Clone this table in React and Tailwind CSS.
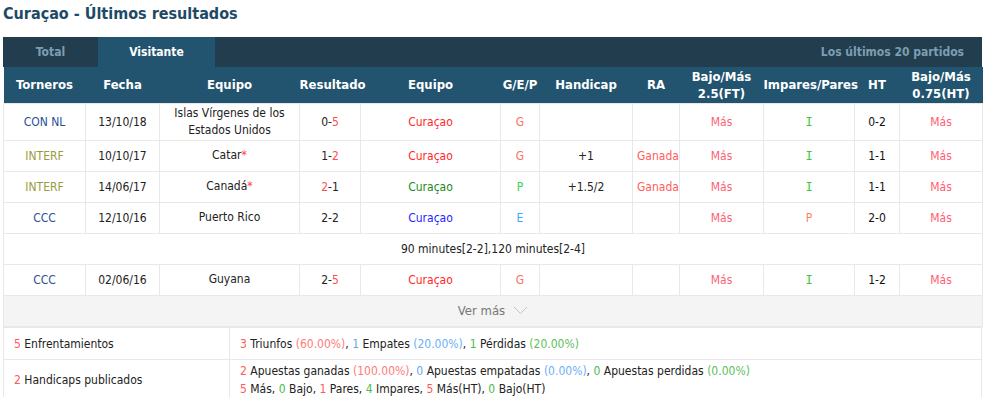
import { useState } from "react";

const cols = [82, 74, 140, 61, 140, 39, 93, 47, 84, 91, 45, 83];

const headers = [
  "Torneros",
  "Fecha",
  "Equipo",
  "Resultado",
  "Equipo",
  "G/E/P",
  "Handicap",
  "RA",
  <>Bajo/Más<br />2.5(FT)</>,
  "Impares/Pares",
  "HT",
  <>Bajo/Más<br />0.75(HT)</>,
];

const teamColor = {
  red: "text-[#ff2a2a]",
  green: "text-[#1a8a1a]",
  blue: "text-[#1f1fff]",
};

const gepColor = {
  G: "text-[#ff6f61]",
  P: "text-[#3ccf5a]",
  E: "text-[#3ea9ff]",
};

const rows = [
  {
    league: "CON NL",
    leagueCls: "text-[#2a4f9a]",
    date: "13/10/18",
    home: "Islas Vírgenes de los Estados Unidos",
    score: [["0", false], ["5", true]],
    away: "Curaçao",
    awayCls: teamColor.red,
    gep: "G",
    hc: "",
    ra: "",
    ou: "Más",
    oe: "I",
    ht: "0-2",
    ouht: "Más",
    tall: true,
  },
  {
    league: "INTERF",
    leagueCls: "text-[#9a9a3e]",
    date: "10/10/17",
    home: "Catar",
    star: true,
    score: [["1", false], ["2", true]],
    away: "Curaçao",
    awayCls: teamColor.red,
    gep: "G",
    hc: "+1",
    ra: "Ganada",
    ou: "Más",
    oe: "I",
    ht: "1-1",
    ouht: "Más",
  },
  {
    league: "INTERF",
    leagueCls: "text-[#9a9a3e]",
    date: "14/06/17",
    home: "Canadá",
    star: true,
    score: [["2", true], ["1", false]],
    away: "Curaçao",
    awayCls: teamColor.green,
    gep: "P",
    hc: "+1.5/2",
    ra: "Ganada",
    ou: "Más",
    oe: "I",
    ht: "1-1",
    ouht: "Más",
  },
  {
    league: "CCC",
    leagueCls: "text-[#2a4f9a]",
    date: "12/10/16",
    home: "Puerto Rico",
    score: [["2", false], ["2", false]],
    away: "Curaçao",
    awayCls: teamColor.blue,
    gep: "E",
    hc: "",
    ra: "",
    ou: "Más",
    oe: "P",
    ht: "2-0",
    ouht: "Más",
    note: "90 minutes[2-2],120 minutes[2-4]",
  },
  {
    league: "CCC",
    leagueCls: "text-[#2a4f9a]",
    date: "02/06/16",
    home: "Guyana",
    score: [["2", false], ["5", true]],
    away: "Curaçao",
    awayCls: teamColor.red,
    gep: "G",
    hc: "",
    ra: "",
    ou: "Más",
    oe: "I",
    ht: "1-2",
    ouht: "Más",
  },
];

const td = "border border-[#e8e8e8] text-center align-middle px-1";

function Row({ r }) {
  return (
    <>
      <tr className={r.tall ? "h-[37px]" : "h-[31px]"}>
        <td className={`${td} ${r.leagueCls}`}>{r.league}</td>
        <td className={`${td} text-[#222]`}>{r.date}</td>
        <td className={`${td} text-[#222] leading-[17px]`}>
          {r.home}
          {r.star && <span className="text-[#ff3b3b]">*</span>}
        </td>
        <td className={`${td} text-[#222]`}>
          <span className={r.score[0][1] ? "text-[#ff4d4d]" : ""}>{r.score[0][0]}</span>-
          <span className={r.score[1][1] ? "text-[#ff4d4d]" : ""}>{r.score[1][0]}</span>
        </td>
        <td className={`${td} ${r.awayCls}`}>{r.away}</td>
        <td className={`${td} ${gepColor[r.gep]}`}>{r.gep}</td>
        <td className={`${td} text-[#222]`}>{r.hc}</td>
        <td className={`${td} text-[#ff5c5c]`}>{r.ra}</td>
        <td className={`${td} text-[#ff6073]`}>{r.ou}</td>
        <td
          className={`${td} ${r.oe === "I" ? "text-[#3cc83c]" : "text-[#ff8060]"}`}
          style={r.oe === "I" ? { fontFamily: '"DejaVu Sans Mono", monospace' } : undefined}
        >
          {r.oe}
        </td>
        <td className={`${td} text-[#111]`}>{r.ht}</td>
        <td className={`${td} text-[#ff6073]`}>{r.ouht}</td>
      </tr>
      {r.note && (
        <tr className="h-[31px]">
          <td colSpan={12} className={`${td} text-[#222]`}>{r.note}</td>
        </tr>
      )}
    </>
  );
}

const R = ({ children }) => <span className="text-[#ff5a5a]">{children}</span>;
const Rl = ({ children }) => <span className="text-[#ff7a7a]">{children}</span>;
const B = ({ children }) => <span className="text-[#6aa8f0]">{children}</span>;
const Bl = ({ children }) => <span className="text-[#6cb0f5]">{children}</span>;
const G = ({ children }) => <span className="text-[#4cba4c]">{children}</span>;
const Gl = ({ children }) => <span className="text-[#5cc05c]">{children}</span>;

export default function App() {
  const [tab, setTab] = useState("Visitante");

  return (
    <div
      className="w-[983px] h-[397px] bg-white text-[12px] text-[#222] overflow-hidden"
      style={{ fontFamily: 'Tahoma, "DejaVu Sans Condensed", "DejaVu Sans", sans-serif' }}
    >
      <h1 className="h-[37px] pl-[3px] pt-[3px] text-[16px] font-bold text-[#1e4a66] leading-[22px]">
        Curaçao - Últimos resultados
      </h1>

      <div className="ml-[3px] mr-[1px]">
        <div className="flex h-[30px] bg-[#223e4e] items-stretch">
          {["Total", "Visitante"].map((t) => (
            <button
              key={t}
              onClick={() => setTab(t)}
              className={`font-bold text-[12px] ${
                t === "Total" ? "w-[95px]" : "w-[117px]"
              } ${tab === t ? "bg-[#22546f] text-white" : "text-[#7d9db2]"}`}
            >
              {t}
            </button>
          ))}
          <div className="flex-1 flex items-center justify-end pr-[18px] font-bold text-[12px] text-[#7d9db2]">
            Los últimos 20 partidos
          </div>
        </div>

        <table className="w-full border-collapse table-fixed">
          <colgroup>
            {cols.map((w, i) => (
              <col key={i} style={{ width: w }} />
            ))}
          </colgroup>
          <thead>
            <tr className="h-[36px] bg-[#22546f] text-white font-bold text-[13px] leading-[17px]">
              {headers.map((h, i) => (
                <th key={i} className="text-center align-middle px-0 font-bold">
                  {h}
                </th>
              ))}
            </tr>
          </thead>
          <tbody>
            {rows.map((r, i) => (
              <Row key={i} r={r} />
            ))}
            <tr className="h-[31px] bg-[#f4f4f4]">
              <td colSpan={12} className="border border-[#e8e8e8] text-center text-[#777] text-[13px]">
                <span className="inline-flex items-center gap-[8px]">
                  Ver más
                  <svg width="15" height="9" viewBox="0 0 15 9" fill="none">
                    <path d="M1 1l6.5 6.5L14 1" stroke="#c4c4c4" strokeWidth="1" />
                  </svg>
                </span>
              </td>
            </tr>
          </tbody>
        </table>

        <table className="w-full border-collapse table-fixed">
          <colgroup>
            <col style={{ width: 226 }} />
            <col />
          </colgroup>
          <tbody>
            <tr className="h-[32px]">
              <td className="border border-[#e8e8e8] pl-[10px] pt-[2px]">
                <R>5</R> Enfrentamientos
              </td>
              <td className="border border-[#e8e8e8] pl-[10px] pt-[2px]">
                <R>3</R> Triunfos <Rl>(60.00%)</Rl>, <B>1</B> Empates <Bl>(20.00%)</Bl>, <G>1</G> Pérdidas{" "}
                <Gl>(20.00%)</Gl>
              </td>
            </tr>
            <tr className="h-[38px]">
              <td className="border border-[#e8e8e8] pl-[10px] pt-[2px]">
                <R>2</R> Handicaps publicados
              </td>
              <td className="border border-[#e8e8e8] pl-[10px] pt-[2px] leading-[18px]">
                <R>2</R> Apuestas ganadas <Rl>(100.00%)</Rl>, <B>0</B> Apuestas empatadas <Bl>(0.00%)</Bl>,{" "}
                <G>0</G> Apuestas perdidas <Gl>(0.00%)</Gl>
                <br />
                <R>5</R> Más, <G>0</G> Bajo, <R>1</R> Pares, <G>4</G> Impares, <R>5</R> Más(HT), <G>0</G> Bajo(HT)
              </td>
            </tr>
          </tbody>
        </table>
      </div>
    </div>
  );
}
